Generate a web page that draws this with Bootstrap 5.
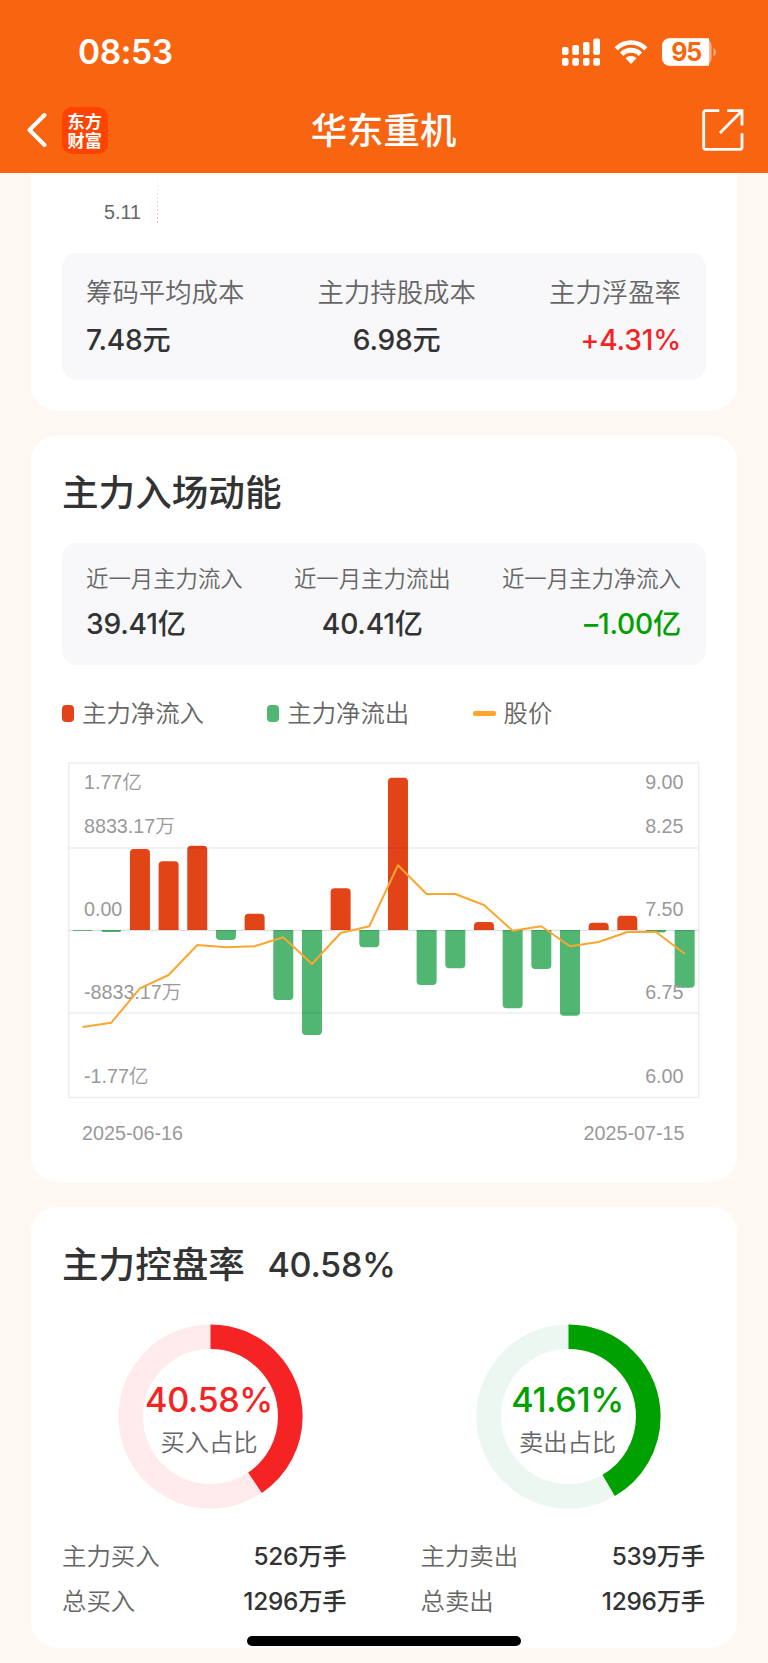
<!DOCTYPE html>
<html lang="zh-CN">
<head>
<meta charset="utf-8">
<meta name="viewport" content="width=device-width, initial-scale=1">
<title>华东重机</title>
<link rel="stylesheet" href="https://cdn.jsdelivr.net/npm/bootstrap@5.3.0/dist/css/bootstrap.min.css">
<style>
  body { background: #fff8f2; color: #333; font-family: Inter, "Noto Sans CJK SC", sans-serif; height: 1663px; overflow: hidden; }
  .topbar { background: #f96411; height: 173px; border-bottom: 0; color: #fff; }
  .status { height: 103.4px; padding: 0 52px 0 78px; }
  .clock { font-size: 33.5px; font-weight: 600; line-height: 40px; letter-spacing: -.4px; }
  .titlebar { height: 54px; padding: 0 24.5px 0 27px; }
  .title { font-size: 36.4px; font-weight: 500; line-height: 54px; margin-left: -.5px; top: .6px; }
  .logo { width: 46.5px; height: 46.5px; border-radius: 10px; background: #ff4400; margin-left: 14.5px; font: 700 17.2px/19.5px "Noto Sans CJK SC", sans-serif; }
  .panel { margin: 0 31px; background: #fff; border-radius: 26px; padding: 0 31px; }
  .panel-a { height: 238px; border-radius: 0 0 26px 26px; }
  .panel-b { height: 746.5px; margin-top: 24px; }
  .panel-c { height: 441px; margin-top: 25.5px; }
  .axis-tail { height: 80px; }
  .stats { background: #f8f8fb; border-radius: 15px; padding: 0 25px 0 24px; }
  .stats-a { height: 127px; padding-top: 18px; }
  .stats-b { height: 122px; padding-top: 16px; }
  .lab { color: #666; font-weight: 350; white-space: nowrap; }
  .stats-a .lab { font-size: 26.4px; line-height: 42px; }
  .stats-b .lab { font-size: 22.4px; line-height: 40px; }
  .num { font-size: 28.2px; font-weight: 500; line-height: 48px; letter-spacing: -.2px; white-space: nowrap; }
  .stats-a .num { margin-top: 3px; }
  .stats-b .num { margin-top: 1px; }
  .up { color: #f52323; }
  .down { color: #00a000; }
  .h-sec { font-size: 36.6px; font-weight: 500; line-height: 54px; margin: 0; }
  .keys { height: 36px; margin-top: 30px; font-size: 24.4px; line-height: 36px; }
  .key { width: 205.3px; }
  .dot { width: 12px; height: 17px; border-radius: 4px; }
  .dash { width: 23px; height: 5px; border-radius: 2px; background: #ffa52c; }
  .chart { display: block; margin-top: 19px; }
  .chart text, .axis-tail text { font-family: "Liberation Sans", "Noto Sans CJK SC", sans-serif; font-size: 19.7px; font-weight: 350; }
  .chart text { fill: #999; }
  .rate { font-size: 34.2px; letter-spacing: -.3px; font-weight: 450; line-height: 54px; }
  .cols { gap: 74px; margin: 32px 1px 0 0; }
  .ring { width: 185px; height: 185px; margin-left: 55.5px; }
  .ring-text { inset: 1px 2px 0 0; }
  .ring-text .pct { font-size: 34.2px; font-weight: 450; line-height: 42px; letter-spacing: -.4px; margin-top: 4px; white-space: nowrap; }
  .ring-text .lab { font-size: 24.3px; line-height: 36px; margin-top: 3px; }
  .totals { margin-top: 24.5px; }
  .line-item { height: 45px; font-size: 24.4px; line-height: 45px; }
  .line-item .val { font-weight: 500; letter-spacing: -.25px; }
  .home { width: 274px; height: 10px; border-radius: 5px; background: #000; left: 247px; top: 1636px; }
</style>
</head>
<body class="position-relative">
<header class="topbar">
  <div class="status d-flex align-items-center justify-content-between">
    <div class="clock">08:53</div>
    <svg width="156" height="30" viewBox="560 36 156 30" fill="#fff">
      <rect x="562" y="46" width="6.5" height="8" rx="2"/><rect x="572.3" y="44" width="6.7" height="10" rx="2"/><rect x="583" y="41" width="6.5" height="13" rx="2"/><rect x="593.3" y="37.5" width="6.7" height="16.5" rx="2"/>
      <rect x="562" y="57" width="6.5" height="7.7" rx="2"/><rect x="572.3" y="57" width="6.7" height="7.7" rx="2"/><rect x="583" y="57" width="6.5" height="7.7" rx="2"/><rect x="593.3" y="57" width="6.7" height="7.7" rx="2"/>
      <path d="M614.6 46.2a23 23 0 0 1 32.8 0l-3.200 3.200a18.400 18.400 0 0 0-26.400 0z"/>
      <path d="M619.900 51.500a15.600 15.600 0 0 1 22.200 0l-3.400 3.500a10.800 10.800 0 0 0-15.400 0z"/>
      <path d="M625.500 57.200a7.800 7.800 0 0 1 11 0L631 63z"/>
      <path d="M713.500 47.300q2.500 1 2.500 4t-2.500 4z" opacity=".5"/>
      <rect x="662" y="37.300" width="49.500" height="27.500" rx="7.500" opacity=".5"/>
      <path d="M669.500 37.300H709V64.800H669.500a7.500 7.500 0 0 1-7.500-7.500V44.800a7.500 7.500 0 0 1 7.500-7.500z"/>
      <text x="686.700" y="60" font-size="25" font-weight="650" fill="#f96411" text-anchor="middle" textLength="31">95</text>
    </svg>
  </div>
  <div class="titlebar d-flex align-items-center justify-content-between position-relative">
    <div class="d-flex align-items-center">
      <svg width="20" height="34" viewBox="0 0 20 34" fill="none" stroke="#fff" stroke-width="4" stroke-linecap="round" stroke-linejoin="round"><path d="M17.500 2 2.500 17l15 15"/></svg>
      <div class="logo d-flex flex-column align-items-center justify-content-center"><span>东方</span><span>财富</span></div>
    </div>
    <div class="title position-absolute start-50 translate-middle-x">华东重机</div>
    <svg width="42" height="42" viewBox="0 0 42 42" fill="none" stroke="#fff" stroke-width="2.800"><path d="M17.300 1.700H3.700q-2 0-2 2V38.300q0 2 2 2H38q2 0 2-2V24.300M25.300 1.700H40V16.500M40 1.700 18 24"/></svg>
  </div>
</header>

<section class="panel panel-a">
  <svg class="axis-tail d-block" width="644" height="80" viewBox="62 173 644 80">
    <defs><linearGradient id="fade" x1="0" y1="0" x2="0" y2="1"><stop offset="0" stop-color="#fff"/><stop offset="1" stop-color="#fff" stop-opacity="0"/></linearGradient></defs>
    <text x="104" y="218.500" fill="#666">5.11</text>
    <path d="M157.500 177v47" stroke="#f7b5bd" stroke-dasharray="2 2"/>
    <rect x="156" y="174" width="3" height="45" fill="url(#fade)"/>
  </svg>
  <div class="stats stats-a d-flex justify-content-between">
    <div><div class="lab">筹码平均成本</div><div class="num">7.48元</div></div>
    <div class="text-center"><div class="lab">主力持股成本</div><div class="num">6.98元</div></div>
    <div class="text-end"><div class="lab">主力浮盈率</div><div class="num up">+4.31%</div></div>
  </div>
</section>

<section class="panel panel-b">
  <h2 class="h-sec" style="padding-top:31px;height:108px">主力入场动能</h2>
  <div class="stats stats-b d-flex justify-content-between">
    <div><div class="lab">近一月主力流入</div><div class="num">39.41亿</div></div>
    <div class="text-center"><div class="lab">近一月主力流出</div><div class="num">40.41亿</div></div>
    <div class="text-end"><div class="lab">近一月主力净流入</div><div class="num down">–1.00亿</div></div>
  </div>
  <div class="keys d-flex lab">
    <div class="key d-flex align-items-center"><i class="dot me-2" style="background:#e24317"></i>主力净流入</div>
    <div class="key d-flex align-items-center"><i class="dot me-2" style="background:#50b671"></i>主力净流出</div>
    <div class="key d-flex align-items-center"><i class="dash me-2"></i>股价</div>
  </div>
  <svg class="chart" id="chart" width="644" height="400" viewBox="62 750 644 400">
    <g id="bars"></g>
    <g stroke="#000" stroke-opacity=".07" fill="none" stroke-width="1.500"><path d="M68.700 763h630v334.500h-630zM68.700 848h630M68.700 1013h630"/><path d="M68.700 930.500h630" stroke-opacity=".12"/></g>
    <text x="84" y="789">1.77亿</text><text x="84" y="832.700">8833.17万</text><text x="84" y="916">0.00</text><text x="84" y="999.300">-8833.17万</text><text x="84" y="1082.700">-1.77亿</text>
    <g text-anchor="end"><text x="683.500" y="789">9.00</text><text x="683.500" y="832.700">8.25</text><text x="683.500" y="916">7.50</text><text x="683.500" y="999.300">6.75</text><text x="683.500" y="1082.700">6.00</text></g>
    <path id="price" fill="none" stroke="#fba62f" stroke-width="2" stroke-linejoin="round"/>
    <text x="82" y="1139.700" textLength="101">2025-06-16</text><text x="583.500" y="1139.700" textLength="101">2025-07-15</text>
  </svg>
</section>

<section class="panel panel-c">
  <div class="d-flex align-items-center" style="padding-top:31px;gap:22.500px"><h2 class="h-sec">主力控盘率</h2><span class="rate">40.58%</span></div>
  <div class="cols d-flex">
    <div class="flex-fill w-50">
      <div class="ring position-relative">
        <svg width="185" height="185" viewBox="-92.500 -92.500 185 185" fill="none" stroke-width="24.600"><circle r="79.800" stroke="#ffebeb"/><circle r="79.800" stroke="#f52323" pathLength="100" stroke-dasharray="40.580 100" transform="rotate(-90)"/></svg>
        <div class="ring-text position-absolute d-flex flex-column align-items-center justify-content-center"><div class="pct up">40.58%</div><div class="lab">买入占比</div></div>
      </div>
      <div class="totals">
        <div class="line-item d-flex justify-content-between"><span class="lab">主力买入</span><span class="val">526万手</span></div>
        <div class="line-item d-flex justify-content-between"><span class="lab">总买入</span><span class="val">1296万手</span></div>
      </div>
    </div>
    <div class="flex-fill w-50">
      <div class="ring position-relative">
        <svg width="185" height="185" viewBox="-92.500 -92.500 185 185" fill="none" stroke-width="24.600"><circle r="79.800" stroke="#ebf7f0"/><circle r="79.800" stroke="#00a000" pathLength="100" stroke-dasharray="41.610 100" transform="rotate(-90)"/></svg>
        <div class="ring-text position-absolute d-flex flex-column align-items-center justify-content-center"><div class="pct down">41.61%</div><div class="lab">卖出占比</div></div>
      </div>
      <div class="totals">
        <div class="line-item d-flex justify-content-between"><span class="lab">主力卖出</span><span class="val">539万手</span></div>
        <div class="line-item d-flex justify-content-between"><span class="lab">总卖出</span><span class="val">1296万手</span></div>
      </div>
    </div>
  </div>
</section>
<div class="home position-absolute"></div>
<script src="https://cdn.jsdelivr.net/npm/bootstrap@5.3.0/dist/js/bootstrap.bundle.min.js"></script>
<script>
  // Signed bar heights: positive is net inflow, negative is net outflow.
  const flow = [-.8, -2, 81, 68.7, 84.3, -10, 16.3, -70, -105, 41.7, -17.3, 152.3, -55, -38.300, 8, -78.300, -39, -85.700, 7.300, 14.300, -2.500, -57.700];
  const price = [1027, 1022.700, 988.300, 975, 945, 947.300, 946.300, 937.300, 964, 933, 926.300, 865.300, 894, 894, 905, 930.700, 926.300, 946.300, 942, 932, 932, 953.700];
  const x = i => 82.600 + 28.670 * i, zero = 930;
  document.getElementById('bars').innerHTML = flow.map((v, i) => {
    const l = x(i) - 10, h = Math.abs(v), r = Math.min(4, h), s = v > 0 ? -1 : 1, end = zero + s * h;
    return `<path fill="${v > 0 ? '#e24317' : '#50b671'}" d="M${l} ${zero}V${end - s * r}Q${l} ${end} ${l + r} ${end}H${l + 20 - r}Q${l + 20} ${end} ${l + 20} ${end - s * r}V${zero}Z"/>`;
  }).join('');
  document.getElementById('price').setAttribute('d', 'M' + price.map((y, i) => `${x(i)} ${y}`).join('L'));
</script>
</body>
</html>
